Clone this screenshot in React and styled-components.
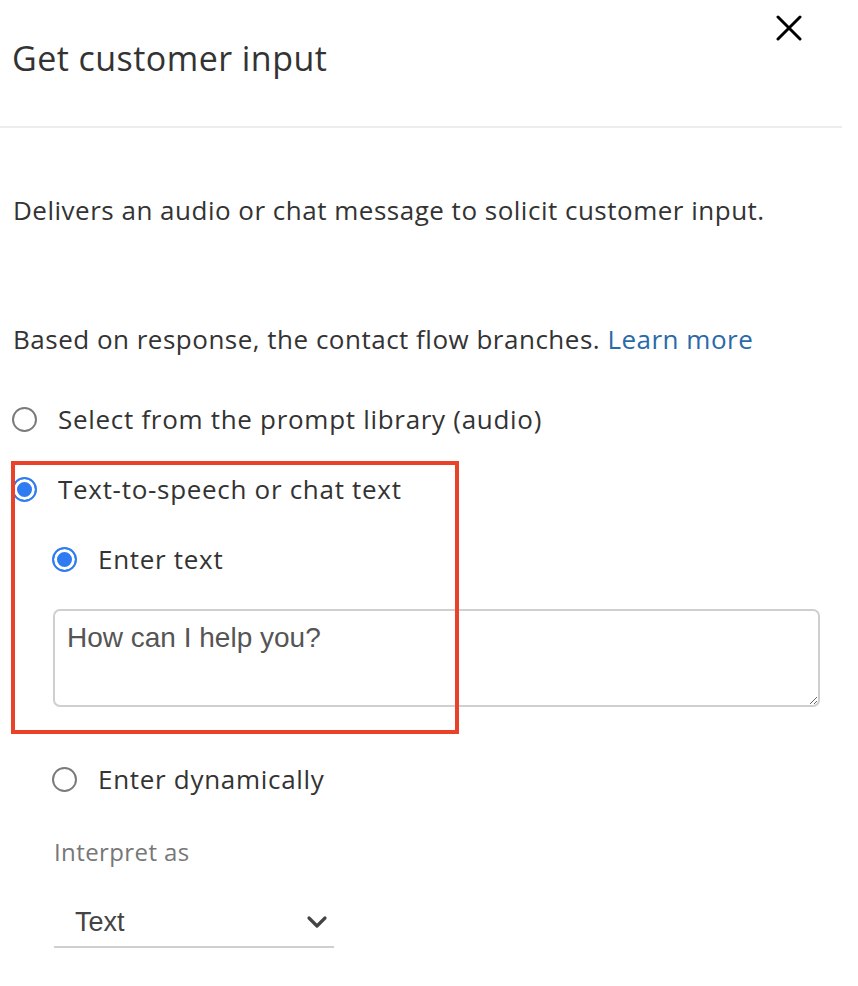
import React from "react";
import styled, { createGlobalStyle } from "styled-components";

const Global = createGlobalStyle`
  html, body { margin: 0; padding: 0; background: #fff; }
  body { font-family: "Open Sans", "Noto Sans", sans-serif; color: #333; }
  * { box-sizing: border-box; }
`;

const Page = styled.div`
  position: relative;
  width: 842px;
  min-height: 986px;
`;

const Header = styled.header`
  height: 128px;
  display: flex;
  justify-content: space-between;
  align-items: flex-start;
  padding: 0 40px 0 12px;
  border-bottom: 2px solid #ececec;
`;

const Title = styled.h1`
  margin: 37px 0 0 0;
  font-size: 34px;
  line-height: 42px;
  font-weight: 400;
  color: #333;
  letter-spacing: 0.45px;
`;

const Close = styled.button`
  margin-top: 15px;
  padding: 0;
  border: 0;
  background: none;
  width: 26px;
  height: 26px;
  display: flex;
  align-items: center;
  justify-content: center;
`;

const Body = styled.div`
  padding: 0 0 0 12px;
  display: flex;
  flex-direction: column;
`;

const Para = styled.p`
  margin: ${(p) => p.$mt}px 0 0 1px;
  font-size: 26px;
  line-height: 36px;
  color: #333;
  letter-spacing: 0.5px;
`;

const Link = styled.a`
  color: #2a6aa8;
  text-decoration: none;
`;

const RadioRow = styled.label`
  display: flex;
  align-items: center;
  gap: 21px;
  height: 36px;
  margin-top: ${(p) => p.$mt}px;
  margin-left: ${(p) => p.$indent}px;
  font-size: 26px;
  font-weight: 500;
  color: #333;
  letter-spacing: 0.7px;
  cursor: pointer;
`;

const Dot = styled.span`
  flex: 0 0 25px;
  width: 25px;
  height: 25px;
  border-radius: 50%;
  border: 2px solid ${(p) => (p.$on ? "#2f7bf2" : "#7b7b7b")};
  background: ${(p) => (p.$on ? "#2f7bf2" : "#fff")};
  box-shadow: ${(p) => (p.$on ? "inset 0 0 0 3px #fff" : "none")};
`;

const TextArea = styled.textarea`
  margin: 32px 22px 0 41px;
  height: 98px;
  border: 2px solid #cfcfcf;
  border-radius: 7px;
  padding: 11px 12px;
  font-family: "Liberation Sans", Arial, sans-serif;
  font-size: 28px;
  line-height: 32px;
  color: #555;
  outline: none;
`;

const Label = styled.div`
  margin: 37px 0 0 42px;
  font-size: 24px;
  line-height: 36px;
  color: #777;
  letter-spacing: 0.4px;
`;

const Select = styled.div`
  margin: 28px 0 0 42px;
  width: 280px;
  height: 50px;
  display: flex;
  align-items: center;
  justify-content: space-between;
  padding: 0 6px 0 21px;
  border-bottom: 2px solid #cfcfcf;
  font-family: "Liberation Sans", Arial, sans-serif;
  font-size: 27px;
  color: #444;
`;

const Annotation = styled.div`
  position: absolute;
  left: 11px;
  top: 461px;
  width: 448px;
  height: 273px;
  border: 4px solid #e94228;
  pointer-events: none;
`;

export default function App() {
  return (
    <Page>
      <Global />
      <Header>
        <Title>Get customer input</Title>
        <Close aria-label="Close">
          <svg width="26" height="26" viewBox="0 0 26 26">
            <path d="M2 2 L24 24 M24 2 L2 24" stroke="#000" strokeWidth="3" strokeLinecap="round" />
          </svg>
        </Close>
      </Header>
      <Body>
        <Para $mt={64}>Delivers an audio or chat message to solicit customer input.</Para>
        <Para $mt={93}>
          Based on response, the contact flow branches. <Link href="#">Learn more</Link>
        </Para>
        <RadioRow $mt={44} $indent={0}>
          <Dot />
          Select from the prompt library (audio)
        </RadioRow>
        <RadioRow $mt={34} $indent={0}>
          <Dot $on />
          Text-to-speech or chat text
        </RadioRow>
        <RadioRow $mt={34} $indent={40}>
          <Dot $on />
          Enter text
        </RadioRow>
        <TextArea defaultValue="How can I help you?" />
        <RadioRow $mt={54} $indent={40}>
          <Dot />
          Enter dynamically
        </RadioRow>
        <Label>Interpret as</Label>
        <Select>
          <span>Text</span>
          <svg width="22" height="14" viewBox="0 0 22 14">
            <path d="M3 3 L11 11 L19 3" fill="none" stroke="#444" strokeWidth="3.2" strokeLinecap="round" strokeLinejoin="round" />
          </svg>
        </Select>
      </Body>
      <Annotation />
    </Page>
  );
}
